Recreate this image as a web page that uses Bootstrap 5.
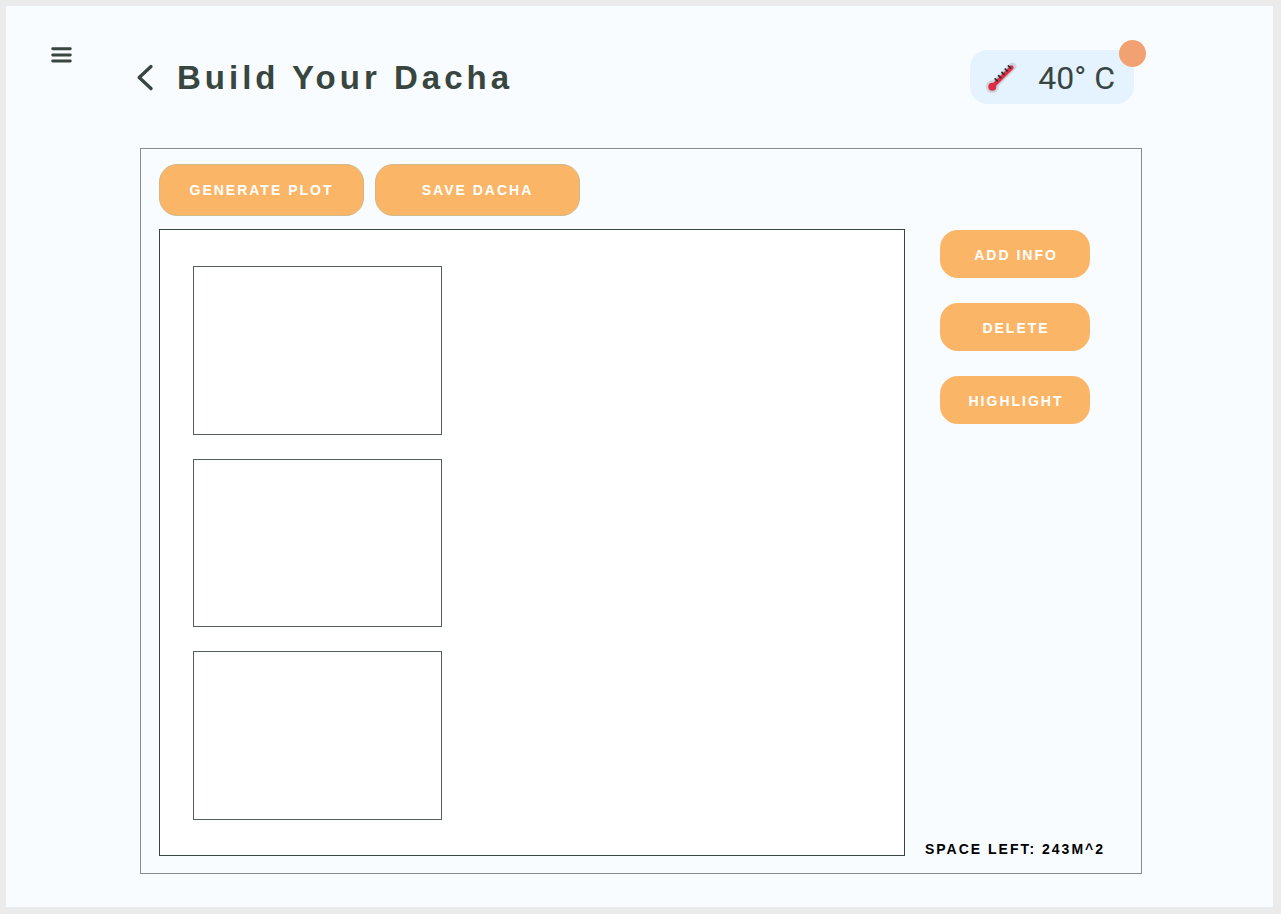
<!DOCTYPE html>
<html lang="en">
<head>
<meta charset="utf-8">
<meta name="viewport" content="width=device-width, initial-scale=1">
<title>Build Your Dacha</title>
<link href="https://cdn.jsdelivr.net/npm/bootstrap@5.3.0/dist/css/bootstrap.min.css" rel="stylesheet">
<style>
  :root { --ink: #38463f; --accent: #fbb567; --page: #f8fcff; }
  body { background: #ebebeb; font-family: "Liberation Sans", Arial, sans-serif; color: var(--ink); }
  .app-frame { min-height: 100vh; padding: 6px 8px 7px 6px; }
  .app-page { background: var(--page); padding: 34px 131px 33px 45px; }
  .app-header { height: 64px; }
  .menu-toggle, .back-link { color: var(--ink); }
  .back-link { margin-left: 62px; margin-right: 20px; height: 54px; }
  .page-title { font-size: 33px; line-height: 52px; letter-spacing: 4px; font-weight: 700; }
  .weather { background: #e4f3ff; width: 164px; height: 54px; border-radius: 18px; padding: 0 19px 0 14px; margin-right: 8px; font: 400 32px/54px Roboto, sans-serif; }
  .weather-value { padding-top: 2px; }
  .alert-dot { position: absolute; top: -10px; right: -12px; width: 27px; height: 27px; border-radius: 50%; background: #f2a272; }
  .app-main { margin-left: 89px; margin-top: 44px; border: 1px solid #868c8e; padding: 15px 36px 17px 18px; }
  .toolbar { gap: 11px; margin-bottom: 13px; }
  .action-btn { background: var(--accent); color: #fff; font-size: 14px; font-weight: 700; letter-spacing: 2px; line-height: 16px; border: 0; border-radius: 18px; width: 150px; height: 48px; padding: 2px 0 0 2px; }
  .action-btn:hover { background: #f5a54d; color: #fff; }
  .action-wide { width: 205px; height: 52px; border: 1px solid #d0b988; padding: 0; }
  .plot-canvas { background: #fff; border: 1px solid var(--ink); padding: 36px 33px 35px; gap: 24px; }
  .plot-cell { width: 249px; border: 1px solid #555d59; }
  .side-tools { width: 180px; margin-left: 20px; }
  .tool-list { gap: 25px; padding-top: 1px; }
  .space-left { font-size: 14px; line-height: 16px; font-weight: 700; letter-spacing: 2px; color: #000; margin-bottom: -1px; }
</style>
</head>
<body>
<div class="app-frame d-flex">
  <div class="app-page flex-grow-1 d-flex flex-column">
    <header class="app-header d-flex align-items-end">
      <button type="button" class="menu-toggle btn p-0 border-0 align-self-start d-flex" aria-label="Menu">
        <svg width="22" height="30" viewBox="0 0 22 30" fill="none" stroke="currentColor" stroke-width="2.9" stroke-linecap="round"><path d="M1.7 8.8H19.3M1.7 15H19.3M1.7 21H19.3"/></svg>
      </button>
      <a href="#" class="back-link d-flex align-items-center" aria-label="Back">
        <svg width="22" height="30" viewBox="0 0 22 30" fill="none" stroke="currentColor" stroke-width="3.4" stroke-linecap="round" stroke-linejoin="round"><path d="M15.6 4.6L3.8 15.6L15.6 26.6" transform="translate(.4 0)"/></svg>
      </a>
      <h1 class="page-title mb-0">Build Your Dacha</h1>
      <div class="weather position-relative ms-auto d-flex align-items-center justify-content-between">
        <svg width="34" height="34" viewBox="0 0 34 34" fill="none" stroke-linecap="round" aria-hidden="true">
          <path d="M8.5 26.5L28.3 6.7" stroke="#cdd7df" stroke-width="8"/>
          <circle cx="8.3" cy="26.7" r="6.4" fill="#cdd7df"/>
          <path d="M8.5 26.5L27.6 7.4" stroke="#dd2e44" stroke-width="4.2"/>
          <circle cx="8.3" cy="26.7" r="4" fill="#dd2e44"/>
          <path d="M11.2 18.8l2 2M14.6 15.6l2 2M17.9 12.3l2 2M21.2 9l2 2M24.4 5.8l2 2" stroke="#292f33" stroke-width="1.7"/>
        </svg>
        <span class="weather-value">40° C</span>
        <span class="alert-dot"></span>
      </div>
    </header>
    <main class="app-main flex-grow-1 d-flex flex-column">
      <div class="toolbar d-flex">
        <button type="button" class="action-btn action-wide btn">GENERATE PLOT</button>
        <button type="button" class="action-btn action-wide btn">SAVE DACHA</button>
      </div>
      <div class="d-flex flex-grow-1">
        <section class="plot-canvas flex-grow-1 d-flex flex-column" aria-label="Plot">
          <div class="plot-cell flex-fill"></div>
          <div class="plot-cell flex-fill"></div>
          <div class="plot-cell flex-fill"></div>
        </section>
        <aside class="side-tools d-flex flex-column justify-content-between align-items-center">
          <div class="tool-list d-flex flex-column">
            <button type="button" class="action-btn btn">ADD INFO</button>
            <button type="button" class="action-btn btn">DELETE</button>
            <button type="button" class="action-btn btn">HIGHLIGHT</button>
          </div>
          <p class="space-left text-nowrap">SPACE LEFT: 243M^2</p>
        </aside>
      </div>
    </main>
  </div>
</div>
<script src="https://cdn.jsdelivr.net/npm/bootstrap@5.3.0/dist/js/bootstrap.bundle.min.js"></script>
</body>
</html>
